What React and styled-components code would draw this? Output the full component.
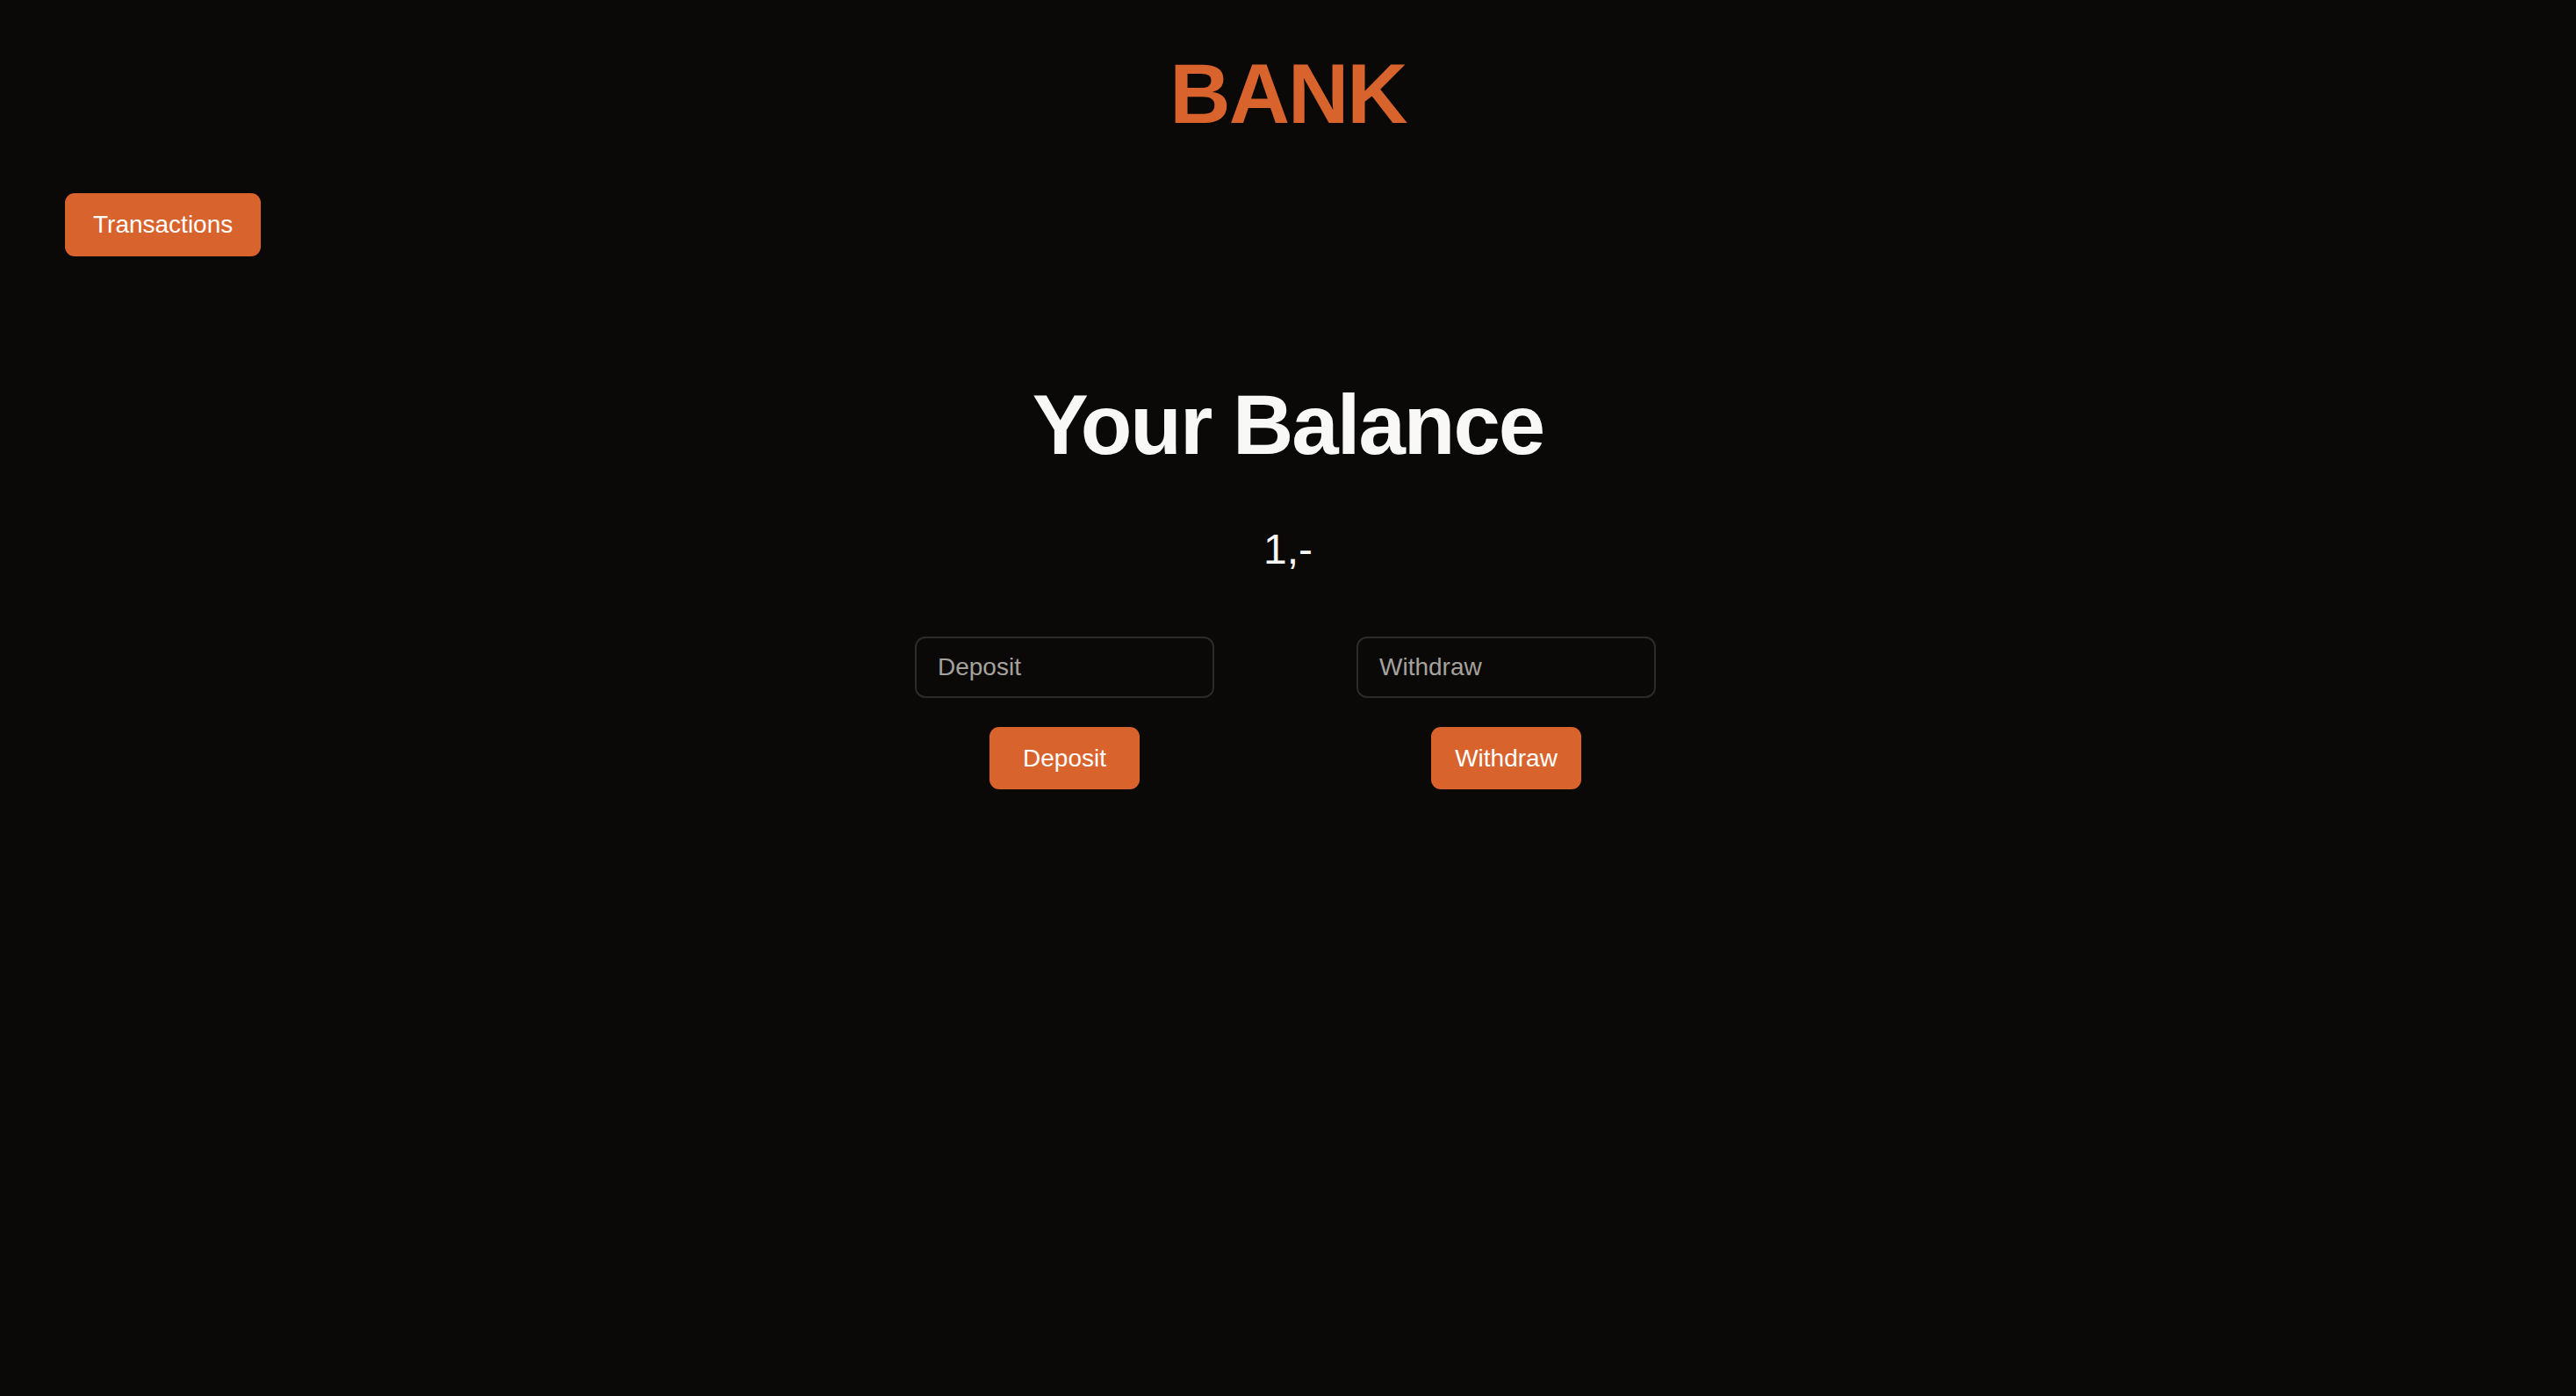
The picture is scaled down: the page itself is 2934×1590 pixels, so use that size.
import React from "react";
import styled, { createGlobalStyle } from "styled-components";

const Global = createGlobalStyle`
  html, body { margin: 0; padding: 0; background: #0a0908; }
  body { font-family: "Liberation Sans", Arial, Helvetica, sans-serif; }
  * { box-sizing: border-box; }
`;

const ORANGE = "#d9632d";

const Page = styled.div`
  min-height: 100vh;
  background: #0a0908;
  color: #f8f8f6;
  padding-top: 59px;
  font-family: "Liberation Sans", Arial, Helvetica, sans-serif;
`;

const Brand = styled.h1`
  margin: 0;
  text-align: center;
  font-size: 96px;
  line-height: 1;
  font-weight: 700;
  letter-spacing: -2px;
  color: ${ORANGE};
`;

const TopBar = styled.div`
  display: flex;
  margin-top: 65px;
  padding-left: 74px;
`;

const Button = styled.button`
  display: inline-flex;
  align-items: center;
  justify-content: center;
  height: ${(p) => p.$height || 72}px;
  width: ${(p) => (p.$width ? `${p.$width}px` : "auto")};
  padding: 0 32px;
  border: none;
  border-radius: 11px;
  background: ${ORANGE};
  color: #ffffff;
  font-family: "Liberation Sans", Arial, Helvetica, sans-serif;
  font-size: 28px;
  line-height: 1;
  cursor: pointer;
`;

const Main = styled.main`
  display: flex;
  flex-direction: column;
  align-items: center;
  margin-top: 144px;
`;

const Heading = styled.h2`
  margin: 0;
  font-size: 96px;
  line-height: 1;
  font-weight: 700;
  letter-spacing: -2px;
  color: #f8f8f6;
`;

const Amount = styled.p`
  margin: 70px 0 0;
  font-size: 48px;
  line-height: 1;
  color: #f8f8f6;
`;

const Actions = styled.div`
  display: flex;
  gap: 162px;
  margin-top: 75px;
  margin-right: 6px;
`;

const ActionColumn = styled.div`
  display: flex;
  flex-direction: column;
  align-items: center;
  gap: 33px;
`;

const Input = styled.input`
  width: 341px;
  height: 70px;
  padding: 0 24px;
  border: 2px solid #2d2b29;
  border-radius: 12px;
  background: #0a0908;
  color: #f8f8f6;
  font-family: "Liberation Sans", Arial, Helvetica, sans-serif;
  font-size: 28px;
  outline: none;
  &::placeholder {
    color: #a5a19d;
  }
`;

export default function App() {
  return (
    <Page>
      <Global />
      <Brand>BANK</Brand>
      <TopBar>
        <Button>Transactions</Button>
      </TopBar>
      <Main>
        <Heading>Your Balance</Heading>
        <Amount>1,-</Amount>
        <Actions>
          <ActionColumn>
            <Input placeholder="Deposit" />
            <Button $width={171} $height={71}>Deposit</Button>
          </ActionColumn>
          <ActionColumn>
            <Input placeholder="Withdraw" />
            <Button $width={171} $height={71}>Withdraw</Button>
          </ActionColumn>
        </Actions>
      </Main>
    </Page>
  );
}
